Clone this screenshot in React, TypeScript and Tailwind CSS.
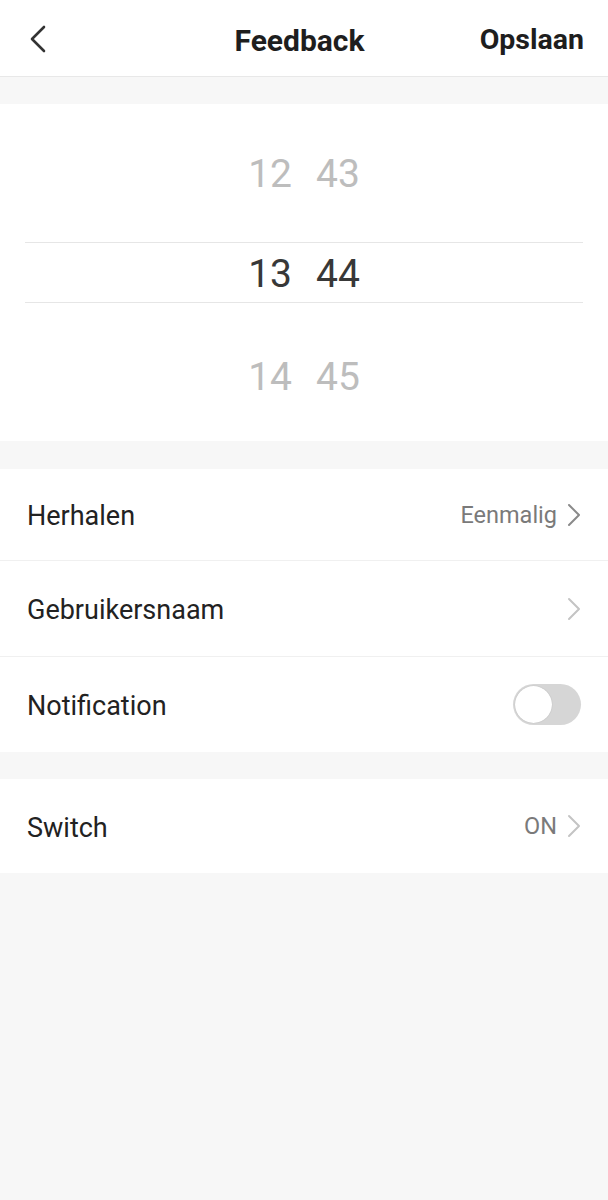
import React from "react";

const Chevron = ({ color = "#b5b5b5" }: { color?: string }) => (
  <svg width="14" height="24" viewBox="0 0 14 24" fill="none">
    <path d="M2 2 L12 12 L2 22" stroke={color} strokeWidth="2" strokeLinecap="round" strokeLinejoin="round" />
  </svg>
);

export default function App() {
  return (
    <div className="min-h-[1200px] bg-[#f7f7f7]" style={{ fontFamily: "Roboto, 'Noto Sans', sans-serif" }}>
      {/* Header */}
      <div className="h-[77px] bg-white border-b border-[#e8e8e8] flex items-center px-[26px] relative">
        <svg width="20" height="30" viewBox="0 0 20 30" fill="none" className="ml-[1px] mt-[2px]">
          <path d="M17 3 L5 15 L17 27" stroke="#333" strokeWidth="2.6" strokeLinecap="round" strokeLinejoin="round" />
        </svg>
        <div className="absolute left-0 right-[9px] text-center text-[30px] font-bold text-[#1e1e1e] pointer-events-none mt-[4px]">Feedback</div>
        <div className="ml-auto text-[28.5px] font-bold text-[#1e1e1e] mr-[-2px] mt-[4px]">Opslaan</div>
      </div>

      {/* Picker */}
      <div className="mt-[27px] bg-white h-[337px] px-[25px] flex flex-col">
        <div className="h-[138px] flex items-end justify-center pb-[48px]">
          <div className="flex gap-[24px] text-[39px] text-[#bdbdbd] leading-none">
            <span>12</span>
            <span>43</span>
          </div>
        </div>
        <div className="h-[61px] border-y border-[#e6e6e6] flex items-center justify-center pt-[4px]">
          <div className="flex gap-[24px] text-[39px] text-[#383838] leading-none">
            <span>13</span>
            <span>44</span>
          </div>
        </div>
        <div className="flex-1 flex items-start justify-center pt-[55px]">
          <div className="flex gap-[24px] text-[39px] text-[#bdbdbd] leading-none">
            <span>14</span>
            <span>45</span>
          </div>
        </div>
      </div>

      {/* Group 1 */}
      <div className="mt-[28px] bg-white">
        <div className="h-[92px] flex items-center pl-[27px] pr-[27px] border-b border-[#f0f0f0]">
          <span className="text-[27px] text-[#222] translate-y-[2px]">Herhalen</span>
          <span className="ml-auto text-[23.5px] text-[#7a7a7a] mr-[10px] translate-y-[1px]">Eenmalig</span>
          <Chevron color="#8a8a8a" />
        </div>
        <div className="h-[96px] flex items-center pl-[27px] pr-[27px] border-b border-[#f0f0f0]">
          <span className="text-[27px] text-[#222] translate-y-[2px]">Gebruikersnaam</span>
          <span className="ml-auto" />
          <Chevron color="#c4c4c4" />
        </div>
        <div className="h-[95px] flex items-center pl-[27px] pr-[27px]">
          <span className="text-[27px] text-[#222] translate-y-[2px]">Notification</span>
          <div className="ml-auto w-[68px] h-[41px] rounded-full bg-[#d6d6d6] p-[2px] flex items-center">
            <div className="w-[37px] h-[37px] rounded-full bg-white shadow-[0_0_1px_rgba(0,0,0,0.25)]" />
          </div>
        </div>
      </div>

      {/* Group 2 */}
      <div className="mt-[27px] bg-white">
        <div className="h-[94px] flex items-center pl-[27px] pr-[27px]">
          <span className="text-[27px] text-[#222] translate-y-[2px]">Switch</span>
          <span className="ml-auto text-[23.5px] text-[#7a7a7a] mr-[10px] translate-y-[1px]">ON</span>
          <Chevron color="#c4c4c4" />
        </div>
      </div>
    </div>
  );
}
